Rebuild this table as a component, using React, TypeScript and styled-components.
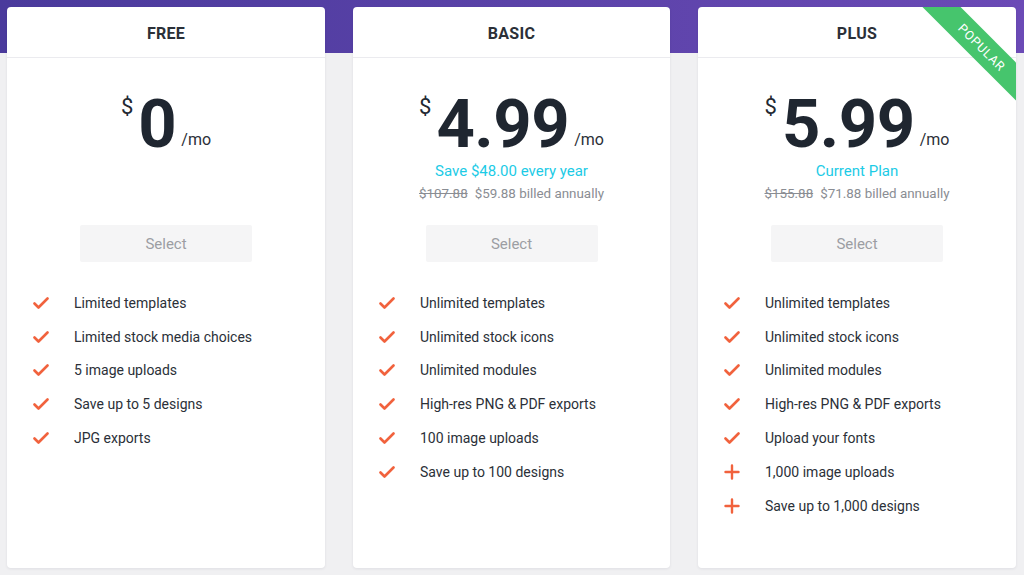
import React from 'react'
import styled, { createGlobalStyle } from 'styled-components'

type Feature = { text: string; extra?: boolean }

type Plan = {
    name: string
    amount: string
    note?: string
    oldPrice?: string
    billed?: string
    popular?: boolean
    features: Feature[]
}

const plans: Plan[] = [
    {
        name: 'FREE',
        amount: '0',
        features: [
            { text: 'Limited templates' },
            { text: 'Limited stock media choices' },
            { text: '5 image uploads' },
            { text: 'Save up to 5 designs' },
            { text: 'JPG exports' },
        ],
    },
    {
        name: 'BASIC',
        amount: '4.99',
        note: 'Save $48.00 every year',
        oldPrice: '$107.88',
        billed: '$59.88 billed annually',
        features: [
            { text: 'Unlimited templates' },
            { text: 'Unlimited stock icons' },
            { text: 'Unlimited modules' },
            { text: 'High-res PNG & PDF exports' },
            { text: '100 image uploads' },
            { text: 'Save up to 100 designs' },
        ],
    },
    {
        name: 'PLUS',
        amount: '5.99',
        note: 'Current Plan',
        oldPrice: '$155.88',
        billed: '$71.88 billed annually',
        popular: true,
        features: [
            { text: 'Unlimited templates' },
            { text: 'Unlimited stock icons' },
            { text: 'Unlimited modules' },
            { text: 'High-res PNG & PDF exports' },
            { text: 'Upload your fonts' },
            { text: '1,000 image uploads', extra: true },
            { text: 'Save up to 1,000 designs', extra: true },
        ],
    },
]

const CheckIcon = () => (
    <svg width="16" height="14" viewBox="0 0 16 14">
        <path d="M1.5 7.5 L5.5 11.5 L14.5 2.5" fill="none" stroke="#f1623d" strokeWidth="2.6" strokeLinecap="round" strokeLinejoin="round" />
    </svg>
)

const PlusIcon = () => (
    <svg width="16" height="16" viewBox="0 0 16 16">
        <path d="M8 1.5 V14.5 M1.5 8 H14.5" fill="none" stroke="#f1623d" strokeWidth="2.4" strokeLinecap="round" />
    </svg>
)

export default function App() {
    return (
        <>
            <GlobalStyle />
            <Page>
                <Band />
                <Cards>
                    {plans.map(plan => (
                        <Card key={plan.name}>
                            {plan.popular && (
                                <RibbonBox>
                                    <Ribbon>POPULAR</Ribbon>
                                </RibbonBox>
                            )}
                            <CardHeader>{plan.name}</CardHeader>
                            <PriceBlock>
                                <PriceRow>
                                    <Currency>$</Currency>
                                    <Amount>{plan.amount}</Amount>
                                    <Period>/mo</Period>
                                </PriceRow>
                                {plan.note && <Note>{plan.note}</Note>}
                                {plan.billed && (
                                    <Billed>
                                        <Strike>{plan.oldPrice}</Strike>
                                        {plan.billed}
                                    </Billed>
                                )}
                            </PriceBlock>
                            <SelectButton>Select</SelectButton>
                            <FeatureList>
                                {plan.features.map(f => (
                                    <FeatureRow key={f.text}>
                                        <IconCell>{f.extra ? <PlusIcon /> : <CheckIcon />}</IconCell>
                                        {f.text}
                                    </FeatureRow>
                                ))}
                            </FeatureList>
                        </Card>
                    ))}
                </Cards>
            </Page>
        </>
    )
}

const GlobalStyle = createGlobalStyle`
    html, body {
        margin: 0;
        padding: 0;
        background: #f0f0f2;
        font-family: Roboto, "Liberation Sans", sans-serif;
        color: #2b3038;
    }
    * { box-sizing: border-box; }
`

const Page = styled.div`
    position: relative;
    width: 1024px;
    height: 575px;
    overflow: hidden;
    background: #f0f0f2;
`

const Band = styled.div`
    position: absolute;
    top: 0;
    left: 0;
    right: 0;
    height: 53px;
    background: linear-gradient(90deg, #4a3a9c 0%, #5a42a8 50%, #6b4ab6 100%);
`

const Cards = styled.div`
    position: relative;
    display: grid;
    grid-template-columns: 318px 317px 318px;
    column-gap: 28px;
    padding: 7px 8px 0 7px;
`

const Card = styled.div`
    position: relative;
    height: 561px;
    background: #fff;
    border-radius: 4px;
    box-shadow: 0 1px 3px rgba(30, 30, 60, 0.08);
    overflow: hidden;
    display: flex;
    flex-direction: column;
`

const RibbonBox = styled.div`
    position: absolute;
    top: 0;
    right: 0;
    width: 100px;
    height: 100px;
    overflow: hidden;
`

const Ribbon = styled.div`
    position: absolute;
    left: -12px;
    top: 23.5px;
    width: 150px;
    height: 27px;
    line-height: 27px;
    transform: rotate(45deg);
    background: #46c56d;
    color: #fff;
    font-size: 12.5px;
    letter-spacing: 0.8px;
    text-align: center;
    padding-left: 8px;
`

const CardHeader = styled.div`
    height: 51px;
    flex-shrink: 0;
    display: flex;
    align-items: center;
    justify-content: center;
    padding-top: 2px;
    border-bottom: 1px solid #ebebef;
    font-size: 16px;
    font-weight: 700;
    letter-spacing: 0.3px;
    color: #2b3038;
`

const PriceBlock = styled.div`
    height: 167px;
    flex-shrink: 0;
    padding-top: 32px;
    display: flex;
    flex-direction: column;
    align-items: center;
`

const PriceRow = styled.div`
    display: flex;
    justify-content: center;
    height: 68px;
`

const Currency = styled.span`
    align-self: flex-start;
    margin-top: 6px;
    font-size: 22px;
    line-height: 22px;
    color: #222832;
`

const Amount = styled.span`
    font-size: 67px;
    line-height: 68px;
    font-weight: 700;
    letter-spacing: -0.5px;
    color: #1f2630;
    margin: 0 5px 0 5px;
`

const Period = styled.span`
    align-self: flex-end;
    margin-bottom: 10px;
    font-size: 16px;
    line-height: 16px;
    color: #2b3038;
`

const Note = styled.div`
    margin-top: 4px;
    font-size: 15px;
    line-height: 18px;
    color: #1ccbe6;
`

const Billed = styled.div`
    margin-top: 6px;
    font-size: 13.4px;
    line-height: 16px;
    color: #8a8d93;
`

const Strike = styled.span`
    text-decoration: line-through;
    margin-right: 7px;
`

const SelectButton = styled.div`
    align-self: center;
    width: 172px;
    height: 37px;
    flex-shrink: 0;
    display: flex;
    align-items: center;
    justify-content: center;
    background: #f5f5f6;
    border-radius: 2px;
    font-size: 15px;
    color: #9c9ea3;
`

const FeatureList = styled.div`
    padding: 24px 0 0 26px;
    display: flex;
    flex-direction: column;
`

const FeatureRow = styled.div`
    height: 33.8px;
    display: flex;
    align-items: center;
    font-size: 14px;
    color: #2b3038;
`

const IconCell = styled.span`
    width: 41px;
    display: flex;
    align-items: center;
`
